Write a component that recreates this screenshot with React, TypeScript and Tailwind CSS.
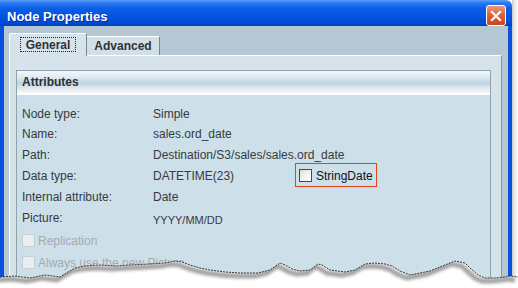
import React from "react";

const edge: [number, number][] = [
  [0, 277], [15, 276], [30, 278], [45, 275], [60, 277], [68, 272], [75, 268], [85, 266], [100, 265],
  [115, 266], [130, 265], [150, 264], [165, 263], [175, 261], [182, 262], [190, 265], [200, 268],
  [210, 270], [225, 272], [240, 273], [258, 273], [270, 270], [280, 263], [285, 265], [292, 269],
  [300, 271], [310, 270], [318, 264], [322, 265], [330, 270], [345, 272], [355, 270], [360, 267],
  [365, 264], [375, 263], [385, 264], [392, 266], [400, 271], [410, 275], [420, 273], [430, 271],
  [440, 267], [450, 263], [455, 261], [460, 262], [465, 263], [470, 268], [478, 275], [485, 278],
  [495, 278], [505, 277], [510, 276], [518, 277],
];

function TornEdge() {
  const line = edge.map(([x, y]) => `${x},${y}`).join(" ");
  const fill = `0,288 ${line} 518,288`;
  const shadow = edge.map(([x, y]) => `${x - 3},${y + 3}`).join(" ");
  return (
    <svg className="absolute left-0 top-0" width="518" height="288" viewBox="0 0 518 288">
      <defs>
        <filter id="blur" x="-10%" y="-50%" width="120%" height="200%">
          <feGaussianBlur stdDeviation="1.6" />
        </filter>
        <clipPath id="below">
          <polygon points={fill} />
        </clipPath>
      </defs>
      <polygon points={fill} fill="#ffffff" />
      <g clipPath="url(#below)">
        <polyline points={shadow} fill="none" stroke="#555" strokeWidth="5" opacity="0.55" filter="url(#blur)" />
      </g>
      <polyline points={line} fill="none" stroke="#222" strokeWidth="0.9" strokeDasharray="2 1" />
    </svg>
  );
}

function Row({ h, label, children }: { h: string; label: string; children?: React.ReactNode }) {
  return (
    <div className={`grid grid-cols-[131px_1fr] items-center ${h}`}>
      <div className="text-[12px] text-[#363a3d] whitespace-nowrap">{label}</div>
      <div className="flex items-center text-[12px] text-[#363a3d] whitespace-nowrap">{children}</div>
    </div>
  );
}

function DisabledCheck({ h, label }: { h: string; label: string }) {
  return (
    <div className={`flex items-center ${h}`}>
      <span className="w-[13px] h-[13px] border border-[#c5cfd4] bg-[#e9eef0] shrink-0" />
      <span className="ml-[3px] text-[12px] text-[#a3acaf]">{label}</span>
    </div>
  );
}

export default function App() {
  return (
    <div
      className="relative w-[518px] h-[288px] overflow-hidden bg-white"
      style={{ fontFamily: '"Liberation Sans", Arial, sans-serif' }}
    >
      <div className="flex h-full">
        <div className="flex flex-col w-[512px] h-full">
          <div className="flex h-[28px] pl-[7px] pr-[6px] rounded-tr-[6px] bg-[linear-gradient(to_bottom,#5b9dfa_0%,#2a78f0_12%,#0a5ce6_35%,#0055e2_65%,#0049d2_90%,#003cb8_100%)]">
            <span className="pt-[9px] text-[13px] font-bold text-white leading-[15px] [text-shadow:1px_1px_0_#0a2e8a]">
              Node Properties
            </span>
            <div className="ml-auto mt-[5px] w-[20px] h-[21px] rounded-[3px] border border-white bg-[linear-gradient(to_bottom,#ec9a7c_0%,#dd6a42_40%,#c9451c_100%)] flex items-center justify-center">
              <svg width="12" height="12" viewBox="0 0 12 12">
                <path d="M2 2 L10 10 M10 2 L2 10" stroke="#ffffff" strokeWidth="2.2" strokeLinecap="square" />
              </svg>
            </div>
          </div>
          <div className="flex-1 flex flex-col bg-[#b4c7d2] border-l-[4px] border-r-[4px] border-[#0b4fdf] pl-[5px] pr-[6px] pt-[7px]">
            <div className="flex items-end h-[22px]">
              <div className="relative z-10 w-[78px] h-[23px] -mb-[1px] bg-[#d6e3eb] border-t border-l border-white border-r border-r-[#7c878d] rounded-t-[2px] flex items-center justify-center">
                <span className="mb-[1px] px-[5px] h-[15px] flex items-center border border-dotted border-[#222] text-[12px] font-bold text-[#2e3236]">
                  General
                </span>
              </div>
              <div className="w-[73px] h-[19px] bg-[#d2dfe7] border-t border-white border-r border-r-[#7c878d] flex items-center justify-center">
                <span className="text-[12px] font-bold text-[#2e3236]">Advanced</span>
              </div>
            </div>
            <div className="flex-1 bg-[#d6e3eb] border-t border-l border-white border-r border-r-[#8a969c] pt-[14px] pl-[6px] pr-[10px]">
              <div className="h-[300px] border border-[#8fa3ae] bg-[#cddfe9]">
                <div className="h-[24px] flex items-center pl-[5px] border-b-2 border-white bg-[linear-gradient(to_bottom,#f4f8fa_0%,#dde9f0_30%,#c0d4e0_55%,#e0eaf0_80%,#f6f9fb_100%)]">
                  <span className="text-[12px] font-bold text-[#2e3236]">Attributes</span>
                </div>
                <div className="pt-[8px] pl-[5px]">
                  <Row h="h-[21px]" label="Node type:">Simple</Row>
                  <Row h="h-[20px]" label="Name:">sales.ord_date</Row>
                  <Row h="h-[21px]" label="Path:">Destination/S3/sales/sales.ord_date</Row>
                  <Row h="h-[21px]" label="Data type:">
                    <span className="w-[146px]">DATETIME(23)</span>
                    <div className="relative flex items-center">
                      <span className="absolute -left-[4px] -top-[4px] w-[82px] h-[24px] border border-[#e2451a]" />
                      <span className="w-[13px] h-[13px] border border-[#1c5180] bg-[linear-gradient(135deg,#dcdcd7_0%,#f2f2ee_50%,#ffffff_100%)]" />
                      <span className="ml-[4px] text-[#111]">StringDate</span>
                    </div>
                  </Row>
                  <Row h="h-[21px]" label="Internal attribute:">Date</Row>
                  <Row h="h-[22px]" label="Picture:">
                    <span className="mt-[5px] text-[11px]">YYYY/MM/DD</span>
                  </Row>
                  <DisabledCheck h="h-[23px]" label="Replication" />
                  <DisabledCheck h="h-[21px]" label="Always use the new Picture" />
                </div>
              </div>
            </div>
          </div>
        </div>
        <div className="w-[6px] h-full bg-[linear-gradient(to_right,#c9cbcc_0%,#e6e7e8_40%,#ffffff_100%)]" />
      </div>
      <TornEdge />
    </div>
  );
}
